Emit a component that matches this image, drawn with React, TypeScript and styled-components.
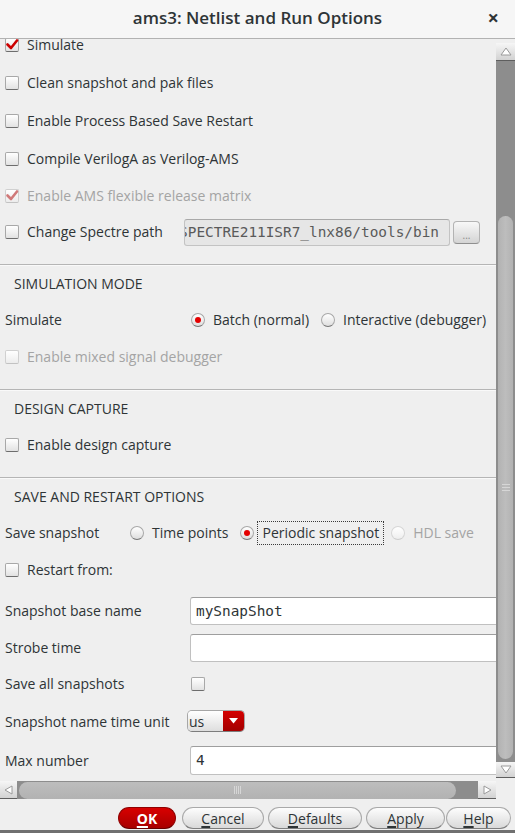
import React from "react";
import styled, { createGlobalStyle } from "styled-components";

const GlobalStyle = createGlobalStyle`
  html, body {
    margin: 0;
    padding: 0;
    background: #efefef;
  }
  body {
    font-family: "Open Sans", "DejaVu Sans", sans-serif;
    font-size: 14px;
    color: #2e3436;
  }
`;

const Window = styled.div`
  width: 515px;
  height: 833px;
  box-sizing: border-box;
  display: flex;
  flex-direction: column;
  background: #efefef;
  border-bottom: 3px solid #707070;
  overflow: hidden;
`;

const TitleBar = styled.div`
  height: 38px;
  flex: none;
  display: grid;
  grid-template-columns: 1fr auto 1fr;
  align-items: center;
  background: #f6f6f6;
  border-bottom: 1px solid #b2b2b2;
`;

const Title = styled.div`
  font-size: 17px;
  font-weight: 600;
  color: #2e3436;
  padding-bottom: 3px;
`;

const Close = styled.div`
  justify-self: end;
  padding: 0 16px 3px 0;
  font-size: 20px;
  font-weight: 700;
  color: #2e3436;
`;

const Body = styled.div`
  flex: 1;
  min-height: 0;
  display: flex;
`;

const Viewport = styled.div`
  flex: 1;
  min-width: 0;
  overflow: hidden;
`;

const Content = styled.div<{ $scroll: number }>`
  margin-top: -${p => p.$scroll}px;
  width: max-content;
  min-width: 100%;
  display: flex;
  flex-direction: column;
`;

const Section = styled.div<{ $pad?: number }>`
  padding-bottom: ${p => p.$pad ?? 14}px;
  border-bottom: 1px solid #b5b5b5;
  box-shadow: 0 1px 0 #f9f9f9;
  &:last-child {
    border-bottom: none;
    box-shadow: none;
  }
`;

const SectionHeading = styled.div`
  height: 36px;
  display: flex;
  align-items: center;
  padding-left: 14px;
  text-transform: uppercase;
`;

const Row = styled.div<{ $h?: number; $mt?: number }>`
  height: ${p => p.$h ?? 37}px;
  margin-top: ${p => p.$mt ?? 0}px;
  display: flex;
  align-items: center;
  padding-left: 5px;
`;

const FieldLabel = styled.div<{ $w: number }>`
  width: ${p => p.$w}px;
  flex: none;
  display: flex;
  align-items: center;
  white-space: nowrap;
`;

const ChoiceGroup = styled.div`
  display: flex;
  align-items: center;
  gap: 7px;
`;

const ChoiceItem = styled.label`
  display: inline-flex;
  align-items: center;
`;

const Box = styled.span<{ $disabled?: boolean }>`
  width: 14px;
  height: 14px;
  flex: none;
  box-sizing: border-box;
  display: inline-flex;
  align-items: center;
  justify-content: center;
  border: 1px solid ${p => (p.$disabled ? "#d0d0d0" : "#a8a8a8")};
  border-bottom-color: ${p => (p.$disabled ? "#c2c2c2" : "#6d6d6d")};
  border-radius: 2px;
  background: linear-gradient(#ffffff, ${p => (p.$disabled ? "#ececec" : "#e2e2e2")});
`;

const RadioDot = styled.span<{ $on?: boolean; $disabled?: boolean }>`
  width: 14px;
  height: 14px;
  flex: none;
  box-sizing: border-box;
  border-radius: 50%;
  display: inline-flex;
  align-items: center;
  justify-content: center;
  border: 1px solid ${p => (p.$disabled ? "#d6d6d6" : "#a8a8a8")};
  border-bottom-color: ${p => (p.$disabled ? "#cccccc" : "#747474")};
  background: linear-gradient(#ffffff, ${p => (p.$disabled ? "#eeeeee" : "#dedede")});
  &::after {
    content: "";
    display: ${p => (p.$on ? "block" : "none")};
    width: 6px;
    height: 6px;
    border-radius: 50%;
    background: #e40000;
  }
`;

const ChoiceText = styled.span<{ $focus?: boolean; $disabled?: boolean }>`
  margin-left: 3px;
  padding: 2px 4px;
  line-height: 18px;
  white-space: nowrap;
  border: 1px dotted ${p => (p.$focus ? "#3a3a3a" : "transparent")};
  color: ${p => (p.$disabled ? "#a4a4a4" : "#2e3436")};
`;

const PlainText = styled.span`
  white-space: nowrap;
`;

const PathField = styled.div`
  width: 266px;
  height: 27px;
  box-sizing: border-box;
  display: flex;
  justify-content: flex-end;
  align-items: center;
  overflow: hidden;
  padding-right: 10px;
  background: #e6e6e6;
  border: 1px solid #c3c3c3;
  border-top-color: #a9a9a9;
  border-radius: 3px;
  font-family: "DejaVu Sans Mono", monospace;
  font-size: 14.4px;
  color: #5a5a5a;
  white-space: nowrap;
`;

const BrowseButton = styled.div`
  margin-left: 3px;
  width: 27px;
  height: 23px;
  box-sizing: border-box;
  display: flex;
  align-items: flex-end;
  justify-content: center;
  padding-bottom: 3px;
  border: 1px solid #b3b3b3;
  border-bottom-color: #8f8f8f;
  border-radius: 4px;
  background: linear-gradient(#f8f8f8, #d4d4d4);
  font-size: 10px;
  line-height: 10px;
  color: #8a8a8a;
`;

const TextField = styled.div<{ $h?: number }>`
  width: 340px;
  height: ${p => p.$h ?? 28}px;
  box-sizing: border-box;
  display: flex;
  align-items: center;
  padding-left: 5px;
  background: #ffffff;
  border: 1px solid #c0c0c0;
  border-top-color: #9e9e9e;
  border-radius: 3px;
  font-family: "DejaVu Sans Mono", monospace;
  font-size: 14.4px;
  color: #2e3436;
`;

const SmallBox = styled(Box)`
  margin-left: 1px;
`;

const Combo = styled.div`
  margin-left: -3px;
  width: 58px;
  height: 22px;
  box-sizing: border-box;
  display: flex;
  border: 1px solid #a6a6a6;
  border-bottom-color: #7d7d7d;
  border-radius: 5px;
  overflow: hidden;
`;

const ComboText = styled.div`
  flex: 1;
  display: flex;
  align-items: center;
  padding-left: 1px;
  background: linear-gradient(#ffffff, #dedede);
  font-size: 14px;
`;

const ComboArrow = styled.div`
  width: 21px;
  display: flex;
  align-items: center;
  justify-content: center;
  background: linear-gradient(#d40000, #a30000);
`;

const VScroll = styled.div`
  width: 19px;
  flex: none;
  display: flex;
  flex-direction: column;
  padding: 4px 0 2px;
  box-sizing: border-box;
`;

const ArrowBox = styled.div<{ $w?: number; $h?: number }>`
  width: ${p => (p.$w ? `${p.$w}px` : "auto")};
  height: ${p => (p.$h ? `${p.$h}px` : "auto")};
  flex: none;
  display: flex;
  align-items: center;
  justify-content: center;
  background: linear-gradient(#f6f6f6, #d2d2d2);
  border-bottom: 1px solid #5e5e5e;
  box-sizing: border-box;
`;

const VTrough = styled.div`
  flex: 1;
  display: flex;
  flex-direction: column;
  align-items: center;
  background: #8d8d8d;
`;

const VThumb = styled.div<{ $top: number }>`
  margin-top: ${p => p.$top}px;
  margin-bottom: 3px;
  width: 15px;
  flex: 1;
  border-radius: 8px;
  background: linear-gradient(90deg, #b2b2b2, #bdbdbd 50%, #b2b2b2);
  display: flex;
  align-items: center;
  justify-content: center;
`;

const GripH = styled.span`
  width: 8px;
  height: 7px;
  background: repeating-linear-gradient(#d6d6d6 0 1px, transparent 1px 3px);
`;

const GripV = styled.span`
  width: 7px;
  height: 8px;
  background: repeating-linear-gradient(90deg, #d6d6d6 0 1px, transparent 1px 2px);
`;

const HScrollRow = styled.div`
  height: 20px;
  flex: none;
  display: flex;
`;

const HScroll = styled.div`
  width: 496px;
  display: flex;
  padding: 1px 0;
  box-sizing: border-box;
`;

const HTrough = styled.div`
  flex: 1;
  display: flex;
  align-items: center;
  background: #8d8d8d;
`;

const HThumb = styled.div<{ $left: number; $w: number }>`
  margin-left: ${p => p.$left}px;
  width: ${p => p.$w}px;
  height: 17px;
  border-radius: 9px;
  background: linear-gradient(#bdbdbd, #b2b2b2);
  display: flex;
  align-items: center;
  justify-content: center;
`;

const ButtonBar = styled.div`
  height: 30px;
  flex: none;
  display: flex;
  justify-content: flex-end;
  align-items: flex-start;
  padding: 7px 4px 0 0;
  box-sizing: border-box;
`;

const Btn = styled.div<{ $w: number; $ml?: number; $primary?: boolean }>`
  width: ${p => p.$w}px;
  margin-left: ${p => p.$ml ?? 4}px;
  height: 22px;
  box-sizing: border-box;
  display: flex;
  align-items: center;
  justify-content: center;
  border-radius: 11px;
  border: 1px solid ${p => (p.$primary ? "#8f0000" : "#a9a9a9")};
  border-bottom-color: ${p => (p.$primary ? "#6a0000" : "#7e7e7e")};
  background: ${p =>
    p.$primary ? "linear-gradient(#d80000, #a80000)" : "linear-gradient(#fdfdfd, #d9d9d9)"};
  color: ${p => (p.$primary ? "#ffffff" : "#2e3436")};
  font-weight: ${p => (p.$primary ? 700 : 400)};
  font-size: 14px;
  u {
    text-decoration-thickness: 2px;
    text-underline-offset: 2px;
  }
`;

function CheckMark({ faded }: { faded?: boolean }) {
  return (
    <svg width="14" height="14" viewBox="0 0 14 14" style={{ overflow: "visible" }}>
      <path
        d="M2.5 6.5 L6 10 L12 2.5"
        fill="none"
        stroke={faded ? "#d07a7a" : "#cc0000"}
        strokeWidth="2.6"
        strokeLinecap="round"
        strokeLinejoin="round"
      />
    </svg>
  );
}

function Check({ label, checked, disabled }: { label: string; checked?: boolean; disabled?: boolean }) {
  return (
    <ChoiceItem>
      <Box $disabled={disabled}>{checked && <CheckMark faded={disabled} />}</Box>
      <ChoiceText $disabled={disabled}>{label}</ChoiceText>
    </ChoiceItem>
  );
}

function Radio({
  label,
  on,
  disabled,
  focus,
}: {
  label: string;
  on?: boolean;
  disabled?: boolean;
  focus?: boolean;
}) {
  return (
    <ChoiceItem>
      <RadioDot $on={on} $disabled={disabled} />
      <ChoiceText $disabled={disabled} $focus={focus}>
        {label}
      </ChoiceText>
    </ChoiceItem>
  );
}

function Arrow({ dir }: { dir: "up" | "down" | "left" | "right" }) {
  const pts = {
    up: "1,8 6,1 11,8",
    down: "1,1 6,8 11,1",
    left: "8,1 1,5 8,9",
    right: "1,1 8,5 1,9",
  }[dir];
  const vertical = dir === "up" || dir === "down";
  return (
    <svg width={vertical ? 12 : 9} height={vertical ? 9 : 10} viewBox={vertical ? "0 0 12 9" : "0 0 9 10"}>
      <polygon points={pts} fill="#ffffff" stroke="#9a9a9a" strokeWidth="1" strokeLinejoin="round" />
    </svg>
  );
}

export default function App() {
  return (
    <>
      <GlobalStyle />
      <Window>
        <TitleBar>
          <span />
          <Title>ams3: Netlist and Run Options</Title>
          <Close>×</Close>
        </TitleBar>

        <Body>
          <Viewport>
            <Content $scroll={13}>
              <Section $pad={14}>
                <Row $h={38}>
                  <Check label="Simulate" checked />
                </Row>
                <Row $h={38}>
                  <Check label="Clean snapshot and pak files" />
                </Row>
                <Row $h={38}>
                  <Check label="Enable Process Based Save Restart" />
                </Row>
                <Row>
                  <Check label="Compile VerilogA as Verilog-AMS" />
                </Row>
                <Row>
                  <Check label="Enable AMS flexible release matrix" checked disabled />
                </Row>
                <Row $h={36}>
                  <FieldLabel $w={179}>
                    <Check label="Change Spectre path" />
                  </FieldLabel>
                  <PathField>/cadence/SPECTRE211ISR7_lnx86/tools/bin</PathField>
                  <BrowseButton>...</BrowseButton>
                </Row>
              </Section>

              <Section>
                <SectionHeading>Simulation Mode</SectionHeading>
                <Row>
                  <FieldLabel $w={186}>Simulate</FieldLabel>
                  <ChoiceGroup>
                    <Radio label="Batch (normal)" on />
                    <Radio label="Interactive (debugger)" />
                  </ChoiceGroup>
                </Row>
                <Row>
                  <Check label="Enable mixed signal debugger" disabled />
                </Row>
              </Section>

              <Section>
                <SectionHeading>Design Capture</SectionHeading>
                <Row>
                  <Check label="Enable design capture" />
                </Row>
              </Section>

              <Section>
                <SectionHeading>Save and Restart Options</SectionHeading>
                <Row>
                  <FieldLabel $w={125}>Save snapshot</FieldLabel>
                  <ChoiceGroup>
                    <Radio label="Time points" />
                    <Radio label="Periodic snapshot" on focus />
                    <Radio label="HDL save" disabled />
                  </ChoiceGroup>
                </Row>
                <Row>
                  <Check label="Restart from:" />
                </Row>
                <Row $mt={4}>
                  <FieldLabel $w={185}>Snapshot base name</FieldLabel>
                  <TextField>mySnapShot</TextField>
                </Row>
                <Row>
                  <FieldLabel $w={185}>Strobe time</FieldLabel>
                  <TextField />
                </Row>
                <Row $h={35}>
                  <FieldLabel $w={185}>Save all snapshots</FieldLabel>
                  <SmallBox />
                </Row>
                <Row $h={40}>
                  <FieldLabel $w={185}>
                    <PlainText>Snapshot name time unit</PlainText>
                  </FieldLabel>
                  <Combo>
                    <ComboText>us</ComboText>
                    <ComboArrow>
                      <svg width="9" height="6" viewBox="0 0 9 6">
                        <polygon points="0,0 9,0 4.5,5.5" fill="#ffffff" />
                      </svg>
                    </ComboArrow>
                  </Combo>
                </Row>
                <Row $h={38}>
                  <FieldLabel $w={185}>Max number</FieldLabel>
                  <TextField $h={29}>4</TextField>
                </Row>
              </Section>
            </Content>
          </Viewport>

          <VScroll>
            <ArrowBox $h={18}>
              <Arrow dir="up" />
            </ArrowBox>
            <VTrough>
              <VThumb $top={155}>
                <GripH />
              </VThumb>
            </VTrough>
            <ArrowBox $h={16}>
              <Arrow dir="down" />
            </ArrowBox>
          </VScroll>
        </Body>

        <HScrollRow>
          <HScroll>
            <ArrowBox $w={17}>
              <Arrow dir="left" />
            </ArrowBox>
            <HTrough>
              <HThumb $left={2} $w={437}>
                <GripV />
              </HThumb>
            </HTrough>
            <ArrowBox $w={18}>
              <Arrow dir="right" />
            </ArrowBox>
          </HScroll>
        </HScrollRow>

        <ButtonBar>
          <Btn $w={58} $primary>
            <span>
              <u>O</u>K
            </span>
          </Btn>
          <Btn $w={82} $ml={6}>
            <span>
              <u>C</u>ancel
            </span>
          </Btn>
          <Btn $w={94}>
            <span>
              <u>D</u>efaults
            </span>
          </Btn>
          <Btn $w={79}>
            <span>
              <u>A</u>pply
            </span>
          </Btn>
          <Btn $w={65} $ml={1}>
            <span>
              <u>H</u>elp
            </span>
          </Btn>
        </ButtonBar>
      </Window>
    </>
  );
}
